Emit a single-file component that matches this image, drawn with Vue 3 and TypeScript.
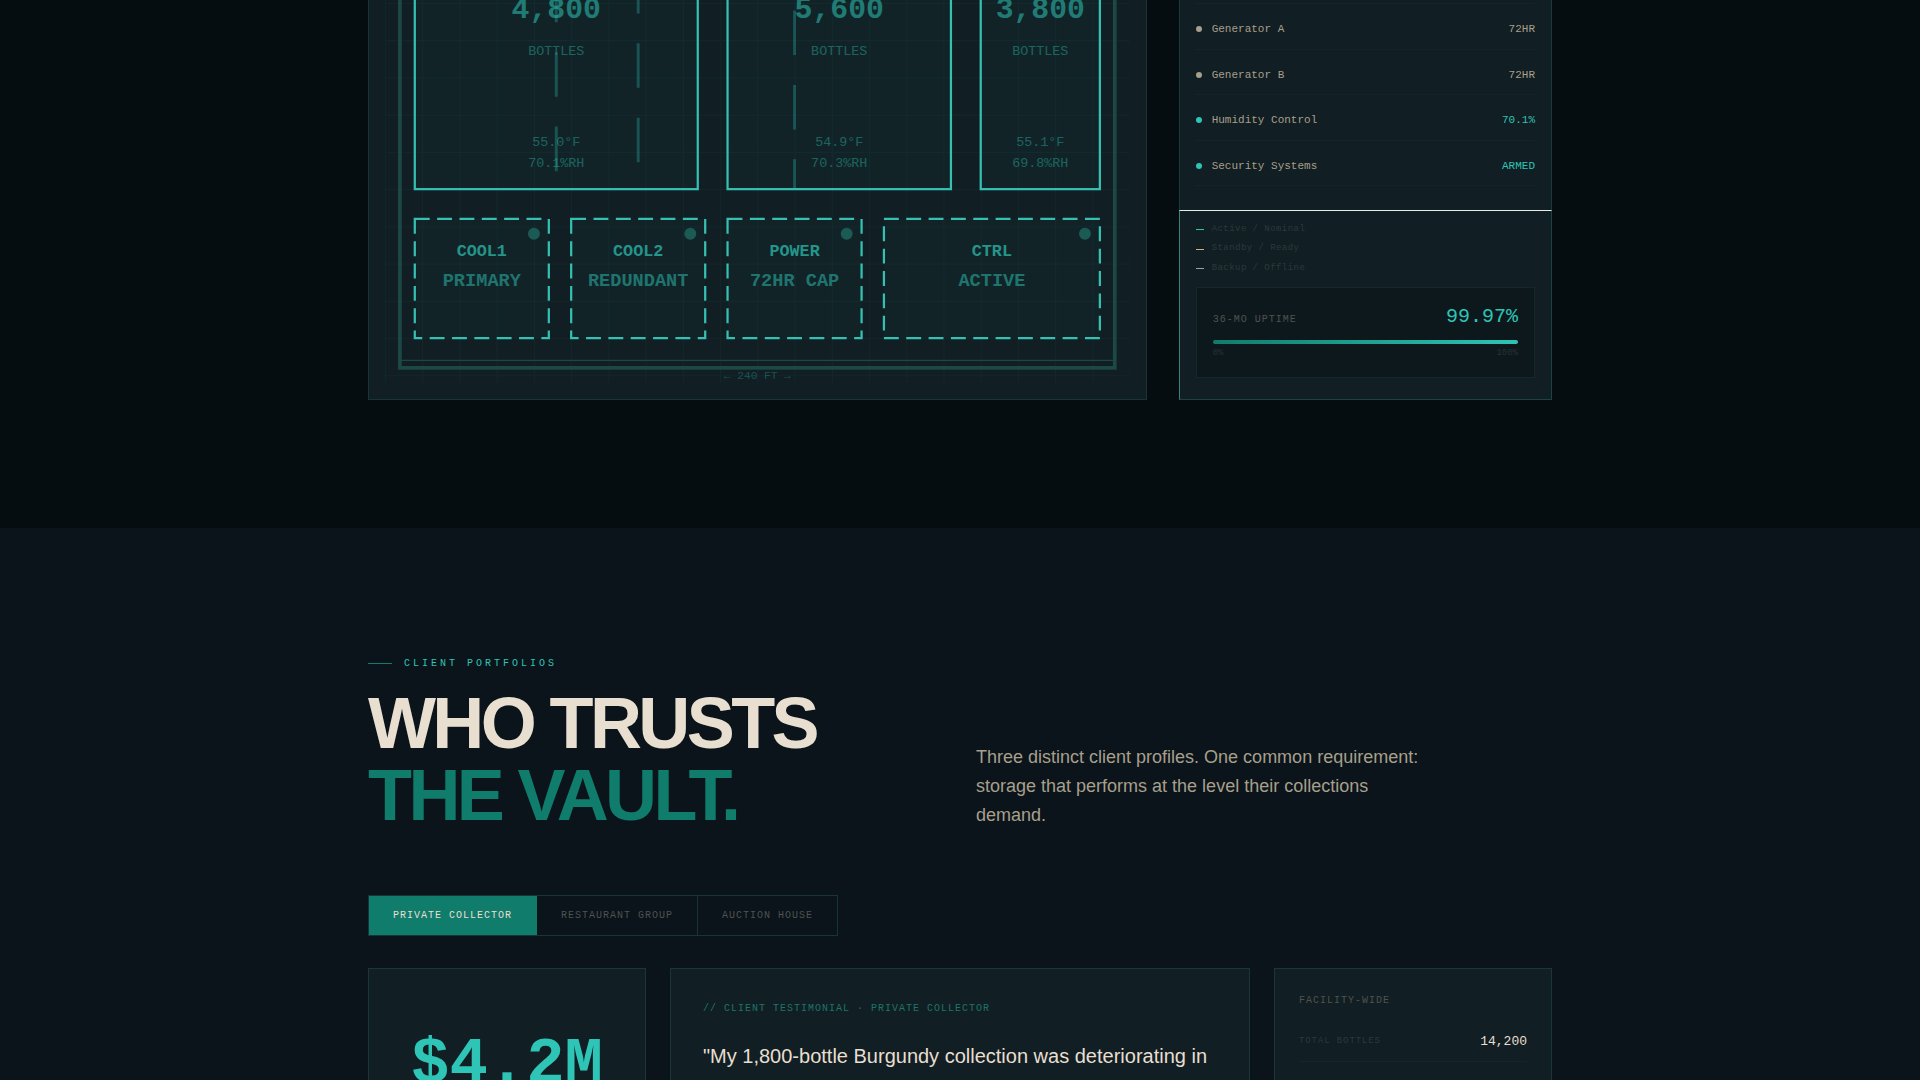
<script setup lang="ts">
import { ref } from 'vue'

interface Room {
  x: number
  width: number
  bottles: string
  temp: string
  humidity: string
}

interface Utility {
  x: number
  width: number
  label: string
  status: string
}

interface System {
  name: string
  value: string
  tone: 'live' | 'ready'
}

const rooms: Room[] = [
  { x: 80, width: 760, bottles: '4,800', temp: '55.0°F', humidity: '70.1%RH' },
  { x: 920, width: 600, bottles: '5,600', temp: '54.9°F', humidity: '70.3%RH' },
  { x: 1600, width: 320, bottles: '3,800', temp: '55.1°F', humidity: '69.8%RH' },
]

const utilities: Utility[] = [
  { x: 80, width: 360, label: 'COOL1', status: 'PRIMARY' },
  { x: 500, width: 360, label: 'COOL2', status: 'REDUNDANT' },
  { x: 920, width: 360, label: 'POWER', status: '72HR CAP' },
  { x: 1340, width: 580, label: 'CTRL', status: 'ACTIVE' },
]

const airflow = [
  { x: 460, from: 332, to: 852 },
  { x: 680, from: 308, to: 828 },
  { x: 1100, from: 220, to: 900 },
]

const systems: System[] = [
  { name: 'Generator A', value: '72HR', tone: 'ready' },
  { name: 'Generator B', value: '72HR', tone: 'ready' },
  { name: 'Humidity Control', value: '70.1%', tone: 'live' },
  { name: 'Security Systems', value: 'ARMED', tone: 'live' },
]

const legend = [
  { label: 'Active / Nominal', tone: 'active' },
  { label: 'Standby / Ready', tone: 'standby' },
  { label: 'Backup / Offline', tone: 'backup' },
]

const tabs = ['Private Collector', 'Restaurant Group', 'Auction House']
const activeTab = ref(0)
</script>

<template>
  <main class="page">
    <section class="facility">
      <div class="wrap facility-grid">
        <div class="plan">
          <svg class="plan-svg" viewBox="0 392 2000 1028" role="img" aria-label="Facility floor plan">
            <defs>
              <pattern id="grid" width="100" height="100" patternUnits="userSpaceOnUse">
                <path class="grid-line" d="M100 0H0V100" />
              </pattern>
            </defs>
            <rect width="2000" height="1420" fill="url(#grid)" />
            <rect class="wall" x="40" y="40" width="1920" height="1340" />
            <line class="wall-inner" x1="40" y1="1360" x2="1960" y2="1360" />
            <g v-for="room in rooms" :key="room.x">
              <rect class="room" :x="room.x" y="80" :width="room.width" height="820" />
              <text class="count" :x="room.x + room.width / 2" y="440">{{ room.bottles }}</text>
              <text class="reading" :x="room.x + room.width / 2" y="540">BOTTLES</text>
              <text class="reading" :x="room.x + room.width / 2" y="783">{{ room.temp }}</text>
              <text class="reading" :x="room.x + room.width / 2" y="840">{{ room.humidity }}</text>
            </g>
            <g v-for="unit in utilities" :key="unit.x">
              <rect class="room utility" :x="unit.x" y="980" :width="unit.width" height="320" />
              <circle class="lamp" :cx="unit.x + unit.width - 40" cy="1020" r="16" />
              <text class="unit-label" :x="unit.x + unit.width / 2" y="1080">{{ unit.label }}</text>
              <text class="unit-status" :x="unit.x + unit.width / 2" y="1160">{{ unit.status }}</text>
            </g>
            <line
              v-for="flow in airflow"
              :key="flow.x"
              class="airflow"
              :x1="flow.x"
              :y1="flow.from"
              :x2="flow.x"
              :y2="flow.to"
            />
            <text class="dimension" x="1000" y="1410">← 240 FT →</text>
          </svg>
        </div>

        <aside class="status">
          <ul class="systems">
            <li v-for="system in systems" :key="system.name" :class="system.tone">
              <i class="dot"></i>
              <span class="system-name">{{ system.name }}</span>
              <span class="system-value">{{ system.value }}</span>
            </li>
          </ul>
          <div class="summary">
            <ul class="legend">
              <li v-for="item in legend" :key="item.label">
                <i class="dash" :class="item.tone"></i>{{ item.label }}
              </li>
            </ul>
            <div class="uptime">
              <div class="uptime-head">
                <span class="uptime-label">36-MO UPTIME</span>
                <span class="uptime-value">99.97%</span>
              </div>
              <div class="bar"></div>
              <div class="scale"><span>0%</span><span>100%</span></div>
            </div>
          </div>
        </aside>
      </div>
    </section>

    <section class="clients">
      <div class="wrap">
        <p class="eyebrow">CLIENT PORTFOLIOS</p>
        <header class="heading">
          <h2>WHO TRUSTS<br /><span>THE VAULT.</span></h2>
          <p>
            Three distinct client profiles. One common requirement: storage that performs at the
            level their collections demand.
          </p>
        </header>

        <div class="tabs" role="tablist">
          <button
            v-for="(tab, index) in tabs"
            :key="tab"
            type="button"
            role="tab"
            :aria-selected="activeTab === index"
            :class="{ active: activeTab === index }"
            @click="activeTab = index"
          >
            {{ tab }}
          </button>
        </div>

        <div class="cards">
          <article class="card value-card">
            <strong>$4.2M</strong>
          </article>
          <article class="card quote-card">
            <p class="tag">// CLIENT TESTIMONIAL · PRIVATE COLLECTOR</p>
            <blockquote>"My 1,800-bottle Burgundy collection was deteriorating in</blockquote>
          </article>
          <article class="card facts-card">
            <h3>FACILITY-WIDE</h3>
            <dl>
              <div class="fact">
                <dt>TOTAL BOTTLES</dt>
                <dd>14,200</dd>
              </div>
            </dl>
          </article>
        </div>
      </div>
    </section>
  </main>
</template>

<style>
body {
  margin: 0;
  background: #0a141a;
}
</style>

<style scoped>
.page {
  --teal: #2ec4b6;
  --teal-deep: #107c6c;
  --cream: #e8dfd0;
  --sand: #a89f8c;
  --muted: #4f524f;
  --faint: #2e383a;
  --card: #111e23;
  --line: #16343a;
  --mono: 'Liberation Mono', monospace;
  height: 100vh;
  overflow: hidden;
  background: #0a141a;
  color: var(--cream);
  font-family: 'Liberation Sans', sans-serif;
  line-height: 1.5;
}

.page * {
  box-sizing: border-box;
}

ul,
p,
h2,
h3,
dl,
dd,
blockquote {
  margin: 0;
  padding: 0;
}

ul {
  list-style: none;
}

.wrap {
  max-width: 1280px;
  margin: 0 auto;
  padding: 0 48px;
}

.facility {
  padding-bottom: 128px;
  background: #050d10;
}

.facility-grid {
  display: grid;
  grid-template-columns: repeat(12, minmax(0, 1fr));
  gap: 32px;
}

.plan {
  grid-column: span 8;
  padding: 0 16px 16px;
  background: var(--card);
  border: 1px solid #1a3436;
  border-top: 0;
}

.plan-svg {
  display: block;
  width: 100%;
}

.plan-svg text {
  font-family: var(--mono);
  text-anchor: middle;
  fill: var(--teal);
}

.grid-line {
  fill: none;
  stroke: var(--teal);
  stroke-opacity: 0.05;
  stroke-width: 5px;
}

.wall {
  fill: none;
  stroke: #1c4845;
  stroke-width: 10px;
}

.wall-inner {
  stroke: #1c4845;
  stroke-width: 3px;
}

.room {
  fill: rgba(46, 196, 182, 0.03);
  stroke: #35c0b2;
  stroke-width: 6px;
}

.utility {
  stroke-dasharray: 40 20;
}

.lamp {
  fill: #1c5a55;
}

.airflow {
  stroke: var(--teal);
  stroke-opacity: 0.3;
  stroke-width: 8px;
  stroke-dasharray: 120 80;
}

.count {
  font-size: 80px;
  font-weight: 700;
  opacity: 0.55;
}

.reading {
  font-size: 36px;
  opacity: 0.4;
}

.unit-label {
  font-size: 45px;
  font-weight: 700;
  opacity: 0.7;
}

.unit-status {
  font-size: 50px;
  font-weight: 700;
  opacity: 0.5;
}

.dimension {
  font-size: 30px;
  opacity: 0.3;
}

.status {
  grid-column: span 4;
  display: flex;
  flex-direction: column;
  font-family: var(--mono);
  background: var(--card);
}

.systems {
  flex: 1;
  padding: 3px 16px 0;
  border: 1px solid #1a3a3b;
  border-width: 0 1px;
}

.systems li {
  display: flex;
  align-items: center;
  gap: 10px;
  padding: 17px 0 11px;
  border-bottom: 1px solid #15242a;
  font-size: 11px;
}

.systems li:first-child {
  border-top: 1px solid #15242a;
}

.dot {
  width: 6px;
  height: 6px;
  border-radius: 50%;
  background: currentColor;
}

.ready {
  color: var(--sand);
}

.live {
  color: var(--teal);
}

.system-name {
  flex: 1;
  color: var(--sand);
}

.summary {
  padding: 12px 16px 21px;
  border: 1px solid #1c4241;
  border-top-color: #e6ecea;
  border-left-color: #348278;
}

.legend {
  display: grid;
  gap: 6px;
  margin-bottom: 12px;
  color: var(--faint);
  font-size: 9px;
  letter-spacing: 0.05em;
}

.legend li {
  display: flex;
  align-items: center;
  gap: 8px;
}

.dash {
  width: 8px;
  height: 1px;
}

.active {
  background: var(--teal);
}

.standby {
  background: #c9b07a;
}

.backup {
  background: #9aa3a0;
}

.uptime {
  padding: 16px;
  border: 1px solid #17282d;
  background: #0d181d;
}

.uptime-head {
  display: flex;
  align-items: baseline;
  justify-content: space-between;
  margin-bottom: 10px;
}

.uptime-label {
  color: var(--muted);
  font-size: 10px;
  letter-spacing: 0.1em;
}

.uptime-value {
  color: var(--teal);
  font-size: 20px;
  line-height: 26px;
}

.bar {
  height: 4px;
  border-radius: 2px;
  background: linear-gradient(90deg, var(--teal-deep), var(--teal));
}

.scale {
  display: flex;
  justify-content: space-between;
  margin-top: 3px;
  color: #263134;
  font-size: 9px;
}

.clients {
  padding: 128px 0;
}

.eyebrow {
  display: flex;
  align-items: center;
  gap: 12px;
  color: var(--teal);
  font-family: var(--mono);
  font-size: 10px;
  letter-spacing: 0.3em;
}

.eyebrow::before {
  content: '';
  width: 24px;
  height: 1px;
  background: var(--teal-deep);
}

.heading {
  display: grid;
  grid-template-columns: 1fr 1fr;
  gap: 32px;
  align-items: end;
  margin: 16px 0 64px;
}

h2 {
  font-size: 72px;
  line-height: 1;
  letter-spacing: -0.05em;
}

h2 span {
  color: var(--teal-deep);
}

.heading p {
  max-width: 448px;
  padding-bottom: 1px;
  color: var(--sand);
  font-size: 18px;
  line-height: 1.6;
}

.tabs {
  display: flex;
  width: fit-content;
  border: 1px solid var(--line);
}

.tabs button {
  padding: 12px 24px;
  border: 0;
  border-right: 1px solid var(--line);
  background: none;
  color: var(--muted);
  font-family: var(--mono);
  font-size: 10px;
  line-height: 15px;
  letter-spacing: 0.1em;
  text-transform: uppercase;
  cursor: pointer;
}

.tabs button:last-child {
  border-right: 0;
}

.tabs button.active {
  border-color: var(--teal-deep);
  background: var(--teal-deep);
  color: var(--cream);
}

.cards {
  display: grid;
  grid-template-columns: repeat(12, minmax(0, 1fr));
  gap: 24px;
  margin-top: 32px;
}

.card {
  border: 1px solid #1b3539;
  background: var(--card);
}

.value-card {
  grid-column: span 3;
  padding: 64px 24px;
  color: var(--teal);
  font-family: var(--mono);
  font-size: 64px;
  line-height: 1;
  text-align: center;
}

.quote-card {
  grid-column: span 6;
  padding: 32px;
}

.tag {
  margin-bottom: 24px;
  color: #1e7468;
  font-family: var(--mono);
  font-size: 10px;
  letter-spacing: 0.1em;
}

blockquote {
  font-size: 20px;
  line-height: 32px;
}

.facts-card {
  grid-column: span 3;
  padding: 24px;
  font-family: var(--mono);
}

h3 {
  margin-bottom: 14px;
  color: var(--muted);
  font-size: 10px;
  font-weight: 400;
  letter-spacing: 0.1em;
}

.fact {
  display: flex;
  align-items: center;
  justify-content: space-between;
  padding: 10px 0;
  border-bottom: 1px solid #15252a;
}

dt {
  color: var(--faint);
  font-size: 9px;
  letter-spacing: 0.1em;
}

dd {
  font-size: 13px;
}
</style>
